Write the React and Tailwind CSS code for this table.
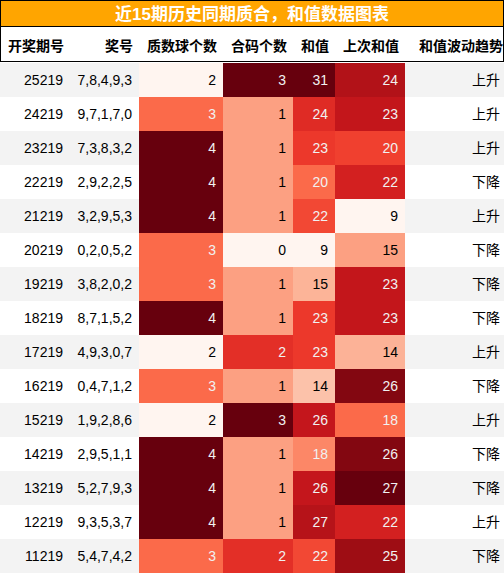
import React from "react";

const REDS = [
  [255, 245, 240],
  [254, 224, 210],
  [252, 187, 161],
  [252, 146, 114],
  [251, 106, 74],
  [239, 59, 44],
  [203, 24, 29],
  [165, 15, 21],
  [103, 0, 13],
];

// matplotlib "Reds", linear between the 9 stops
const reds = (x) => {
  const p = Math.min(Math.max(x, 0), 1) * (REDS.length - 1);
  const i = Math.min(Math.floor(p), REDS.length - 2);
  const t = p - i;
  return REDS[i].map((c, k) => Math.round(c + (REDS[i + 1][k] - c) * t));
};

const luminance = ([r, g, b]) => {
  const lin = (c) => {
    c = c / 255;
    return c <= 0.03928 ? c / 12.92 : Math.pow((c + 0.055) / 1.055, 2.4);
  };
  return 0.2126 * lin(r) + 0.7152 * lin(g) + 0.0722 * lin(b);
};

const rows = [
  ["25219", "7,8,4,9,3", 2, 3, 31, 24, "上升"],
  ["24219", "9,7,1,7,0", 3, 1, 24, 23, "上升"],
  ["23219", "7,3,8,3,2", 4, 1, 23, 20, "上升"],
  ["22219", "2,9,2,2,5", 4, 1, 20, 22, "下降"],
  ["21219", "3,2,9,5,3", 4, 1, 22, 9, "上升"],
  ["20219", "0,2,0,5,2", 3, 0, 9, 15, "下降"],
  ["19219", "3,8,2,0,2", 3, 1, 15, 23, "下降"],
  ["18219", "8,7,1,5,2", 4, 1, 23, 23, "下降"],
  ["17219", "4,9,3,0,7", 2, 2, 23, 14, "上升"],
  ["16219", "0,4,7,1,2", 3, 1, 14, 26, "下降"],
  ["15219", "1,9,2,8,6", 2, 3, 26, 18, "上升"],
  ["14219", "2,9,5,1,1", 4, 1, 18, 26, "下降"],
  ["13219", "5,2,7,9,3", 4, 1, 26, 27, "下降"],
  ["12219", "9,3,5,3,7", 4, 1, 27, 22, "上升"],
  ["11219", "5,4,7,4,2", 3, 2, 22, 25, "下降"],
];

const headers = ["开奖期号", "奖号", "质数球个数", "合码个数", "和值", "上次和值", "和值波动趋势"];
const cols = "grid grid-cols-[70px_69px_84px_70px_42px_70px_99px]";

const ranges = [2, 3, 4, 5].map((c) => {
  const vals = rows.map((r) => r[c]);
  return [Math.min(...vals), Math.max(...vals)];
});

const GradCell = ({ value, col }) => {
  const [lo, hi] = ranges[col];
  const rgb = reds((value - lo) / (hi - lo));
  const text = luminance(rgb) < 0.408 ? "#f1f1f1" : "#000000";
  return (
    <div
      className="flex items-center justify-end pr-[7px]"
      style={{ backgroundColor: `rgb(${rgb.join(",")})`, color: text }}
    >
      {value}
    </div>
  );
};

export default function App() {
  return (
    <div
      className="w-[504px] h-[574px] bg-white text-[14px] text-black"
      style={{ fontFamily: '"Liberation Sans", "Noto Sans CJK SC", sans-serif' }}
    >
      {/* Title */}
      <div className="h-[27px] border border-black bg-[#ffa500] flex items-center justify-center text-white font-bold text-[17px] pt-[2px]">
        近15期历史同期质合，和值数据图表
      </div>

      {/* Header */}
      <div className={`${cols} h-[35px] border-x border-b border-black font-bold`}>
        {headers.map((h, i) => (
          <div
            key={h}
            className={`flex items-center justify-end pt-[4px] whitespace-nowrap ${i === 6 ? "pr-[2px]" : "pr-[7px]"}`}
          >
            {h}
          </div>
        ))}
      </div>

      {/* Rows */}
      <div className="mt-px">
        {rows.map((r, i) => (
          <div key={r[0]} className={`${cols} h-[34px] ${i % 2 === 0 ? "bg-[#f3f3f3]" : "bg-white"}`}>
            <div className="flex items-center justify-end pr-[7px]">{r[0]}</div>
            <div className="flex items-center justify-end pr-[7px]">{r[1]}</div>
            <GradCell value={r[2]} col={0} />
            <GradCell value={r[3]} col={1} />
            <GradCell value={r[4]} col={2} />
            <GradCell value={r[5]} col={3} />
            <div className="flex items-center justify-end pr-[4px]">{r[6]}</div>
          </div>
        ))}
      </div>
    </div>
  );
}
